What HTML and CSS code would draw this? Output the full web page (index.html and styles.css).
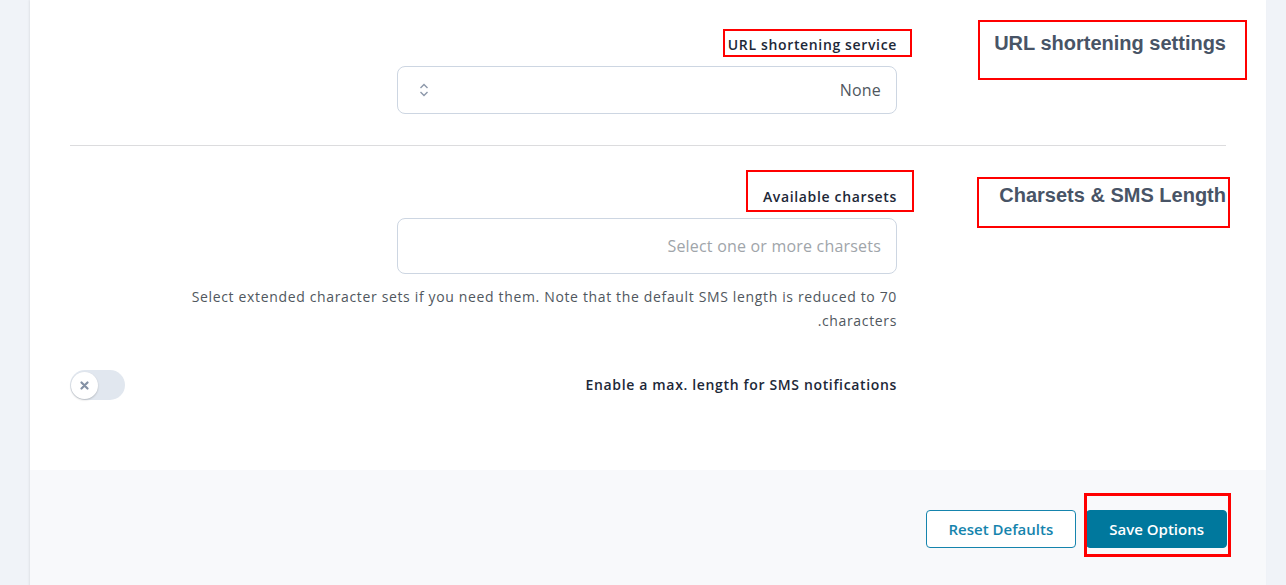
FILE: index.html
```html
<!DOCTYPE html>
<html lang="en" dir="rtl">
<head>
  <meta charset="UTF-8">
  <title>SMS options</title>
  <link rel="stylesheet" href="styles.css">
</head>
<body>
  <div class="page">
    <div class="card">
      <div class="card-body">
        <div class="section first">
          <div class="section-title">
            <h3 class="marked mark-h1">URL shortening settings</h3>
          </div>
          <div class="section-fields">
            <label class="field-label marked mark-l1">URL shortening service</label>
            <div class="select">
              <span>None</span>
              <svg width="10" height="16" viewBox="0 0 10 16"><path d="M1.5 6 L5 2.5 L8.5 6 M1.5 10 L5 13.5 L8.5 10" fill="none" stroke="#8d98aa" stroke-width="1.4"/></svg>
            </div>
          </div>
        </div>

        <div class="section last">
          <div class="section-title">
            <h3 class="marked mark-h2">Charsets &amp; SMS Length</h3>
          </div>
          <div class="section-fields">
            <label class="field-label marked mark-l2">Available charsets</label>
            <div class="multi">Select one or more charsets</div>
            <p class="desc">Select extended character sets if you need them. Note that the default SMS length is reduced to 70 characters.</p>
            <div class="toggle-row">
              <span class="field-label">Enable a max. length for SMS notifications</span>
              <span class="toggle">
                <span class="knob">
                  <svg width="9" height="9" viewBox="0 0 9 9"><path d="M1.5 1.5 L7.5 7.5 M7.5 1.5 L1.5 7.5" stroke="#8491a4" stroke-width="2.2" stroke-linecap="round"/></svg>
                </span>
              </span>
            </div>
          </div>
        </div>
      </div>
      <div class="card-footer">
        <button class="btn primary marked mark-save">Save Options</button>
        <button class="btn outline">Reset Defaults</button>
      </div>
    </div>
  </div>
</body>
</html>
```

FILE: styles.css
```css
body { margin: 0; background: #f0f3f8; font-family: "Open Sans", Arial, sans-serif; color: #1d2838; }
.page { padding: 0 20px 0 30px; }
.card { background: #fff; box-shadow: -1px 0 2px rgba(0,0,0,.07); }
.card-body { padding: 0 40px 70px 40px; }

.section { display: flex; padding: 37px 0 31px; border-top: 1px solid #dcdcde; }
.section.first { border-top: none; padding-top: 31px; }
.section.last { padding-bottom: 0; }
.section-title { width: 329px; }
.section-title h3 { margin: 0; font-family: "Liberation Sans", Arial, sans-serif; font-size: 20px; line-height: 24px; font-weight: bold; color: #485466; display: inline-block; }
.section-fields { flex: 1; }

.field-label { display: inline-block; margin-top: 4px; font-size: 14px; line-height: 20px; font-weight: 600; letter-spacing: .65px; color: #1d2838; }
.select, .multi { width: 500px; box-sizing: border-box; border: 1px solid #cdd6e2; border-radius: 8px; margin-top: 11px; display: flex; align-items: center; justify-content: space-between; font-size: 16px; letter-spacing: .2px; }
.select { height: 48px; padding: 0 15px 0 21px; color: #50575e; }
.multi { height: 56px; padding: 0 15px; color: #a0a5aa; }
.desc { margin: 11px 0 0; max-width: 712px; font-size: 14px; line-height: 24px; letter-spacing: .65px; color: #50575e; }

.toggle-row { display: flex; justify-content: space-between; align-items: center; margin-top: 37px; }
.toggle-row .field-label { margin-top: 0; }
.toggle { width: 55px; height: 30px; border-radius: 15px; background: #e1e7ef; display: flex; align-items: center; justify-content: flex-end; padding: 0 2px 0 1px; box-sizing: border-box; }
.knob { width: 27px; height: 27px; border-radius: 50%; background: #fff; box-shadow: 0 1px 2px rgba(0,0,0,.2); display: flex; align-items: center; justify-content: center; }

.card-footer { background: #f8f9fb; padding: 40px 39px 40px 0; display: flex; gap: 10px; }
.btn { height: 38px; border-radius: 4px; font-family: "Open Sans", Arial, sans-serif; font-size: 15px; font-weight: 600; padding: 0 22px; cursor: pointer; }
.btn.primary { background: #00789d; border: 1px solid #00789d; color: #fff; }
.btn.outline { background: #fff; border: 1px solid #1584ad; color: #1584ad; }

/* red annotation boxes drawn over the screenshot */
.marked { position: relative; }
.marked::after { content: ""; position: absolute; border: 2px solid #f00; }
.mark-h1::after { top: -11px; bottom: -25px; left: -16px; right: -21px; }
.mark-l1::after { top: -6px; bottom: -2px; left: -5px; right: -15px; }
.mark-h2::after { top: -6px; bottom: -21px; left: -22px; right: -4px; }
.mark-l2::after { top: -17px; bottom: -5px; left: -17px; right: -17px; }
.mark-save::after { top: -18px; bottom: -10px; left: -3px; right: -5px; border-width: 3px; }
```
